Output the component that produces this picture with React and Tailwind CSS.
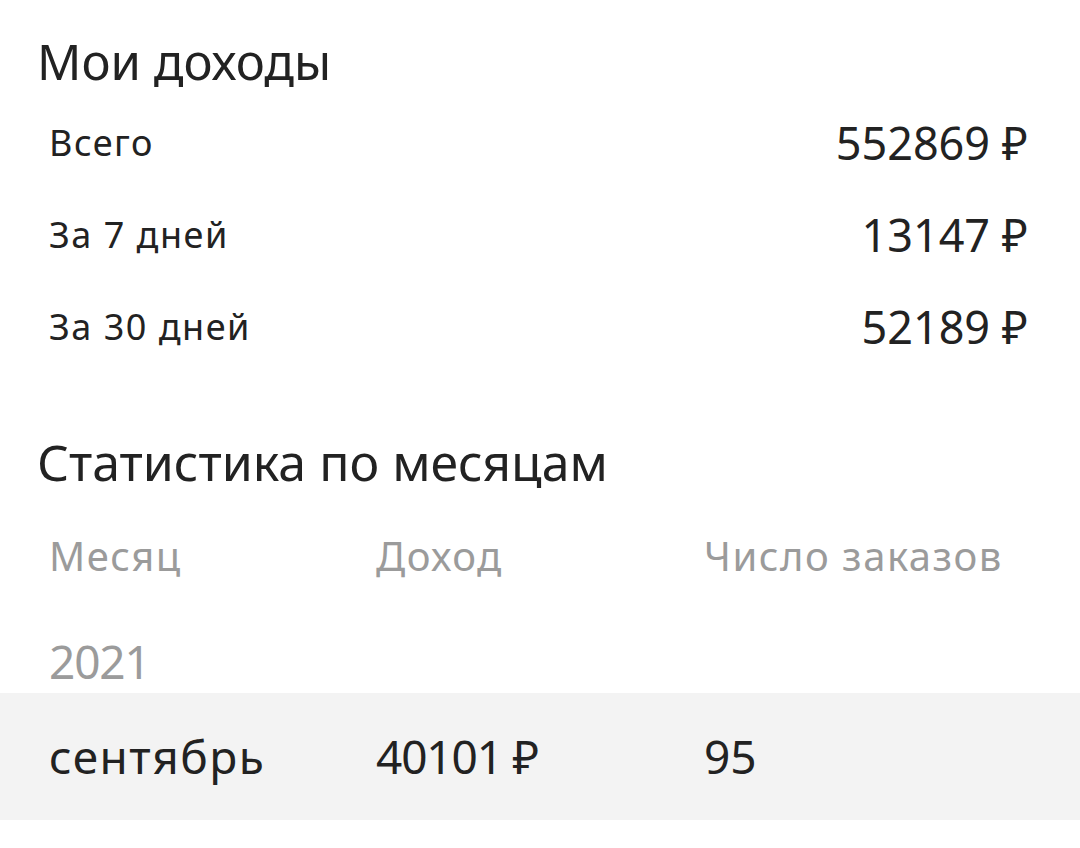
export default function App() {
  const totals = [
    { label: "Всего", value: "552869 ₽" },
    { label: "За 7 дней", value: "13147 ₽" },
    { label: "За 30 дней", value: "52189 ₽" },
  ];

  return (
    <div
      className="w-[1080px] h-[848px] bg-white text-[#222222] overflow-hidden"
      style={{ fontFamily: '"Noto Sans", "Open Sans", sans-serif' }}
    >
      {/* Мои доходы */}
      <h1 className="pl-[37px] pt-[36px] text-[49px] leading-[50px]">Мои доходы</h1>

      <div className="mt-[11px]">
        {totals.map((row) => (
          <div key={row.label} className="h-[92px] flex items-center justify-between pl-[49px] pr-[52px]">
            <span className="text-[36px] tracking-[1.5px]">{row.label}</span>
            <span className="text-[45px]">{row.value}</span>
          </div>
        ))}
      </div>

      {/* Статистика */}
      <h2 className="mt-[47px] h-[84px] flex items-center pl-[37px] text-[50px]">
        Статистика по месяцам
      </h2>

      <div className="h-[104px] grid grid-cols-[327px_328px_1fr] items-center pl-[49px] text-[40px] tracking-[1.5px] text-[#9b9b9b]">
        <span>Месяц</span>
        <span>Доход</span>
        <span>Число заказов</span>
      </div>

      <div className="h-[85px] pl-[49px] pt-[29px] text-[46px] leading-[48px] tracking-tight text-[#9b9b9b]">2021</div>

      <div className="h-[127px] bg-[#f3f3f3] grid grid-cols-[327px_328px_1fr] items-center pl-[49px] text-[46px]">
        <span className="tracking-[1.5px]">сентябрь</span>
        <span className="tracking-tight">40101 ₽</span>
        <span>95</span>
      </div>
    </div>
  );
}
